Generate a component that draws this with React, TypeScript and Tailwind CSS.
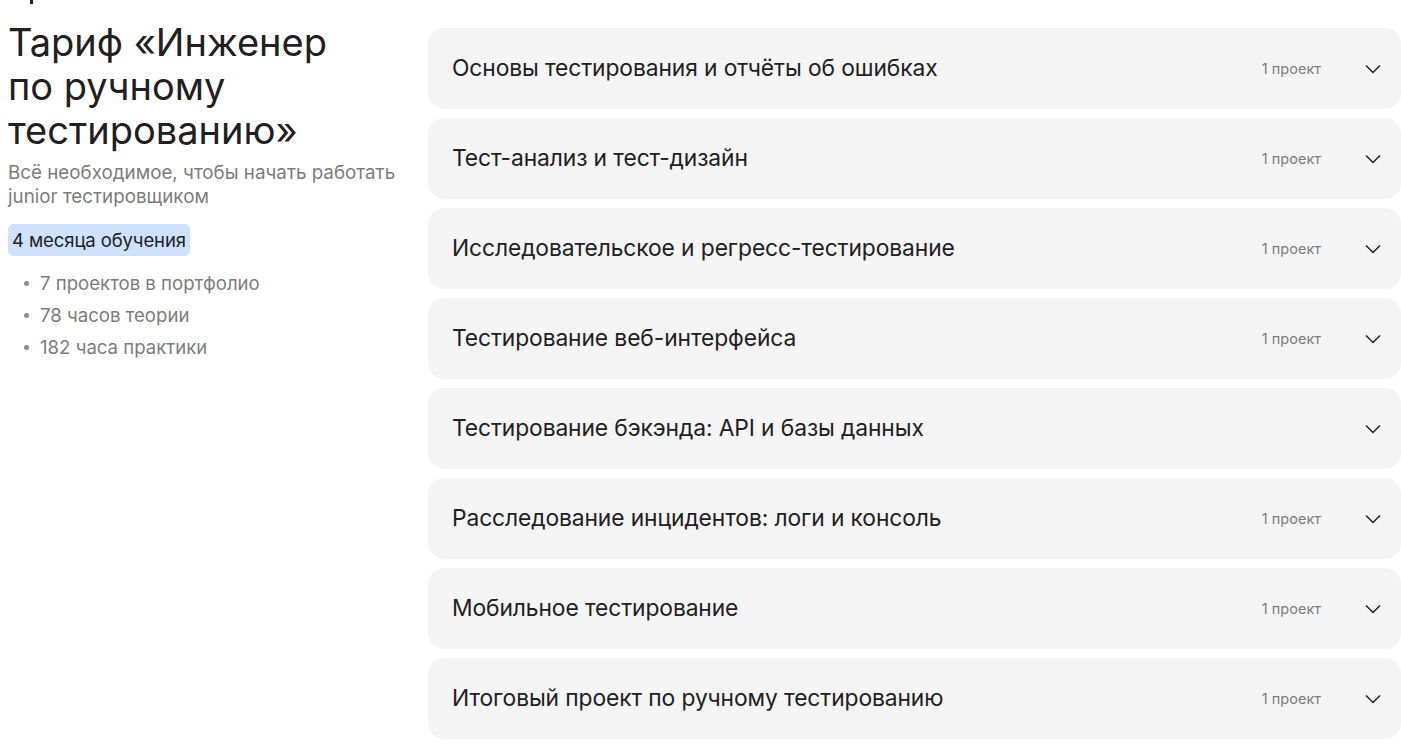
const modules = [
    { title: "Основы тестирования и отчёты об ошибках", projects: "1 проект" },
    { title: "Тест-анализ и тест-дизайн", projects: "1 проект" },
    { title: "Исследовательское и регресс-тестирование", projects: "1 проект" },
    { title: "Тестирование веб-интерфейса", projects: "1 проект" },
    { title: "Тестирование бэкэнда: API и базы данных", projects: "" },
    { title: "Расследование инцидентов: логи и консоль", projects: "1 проект" },
    { title: "Мобильное тестирование", projects: "1 проект" },
    { title: "Итоговый проект по ручному тестированию", projects: "1 проект" },
];

const facts = ["7 проектов в портфолио", "78 часов теории", "182 часа практики"];

const Chevron = () => (
    <svg width="24" height="24" viewBox="0 0 24 24" fill="none" className="text-[#21201f]">
        <path d="M5 8.5l7 7 7-7" stroke="currentColor" strokeWidth="1.5" />
    </svg>
);

const App = () => (
    <div className="min-h-[745px] bg-white text-[#21201f] font-['Inter','Noto_Sans',sans-serif]">
        <div className="ml-[30px] w-[3px] h-[4px] bg-[#21201f]" />
        <div className="flex pl-2 gap-[28px]">
            <aside className="w-[392px] shrink-0">
                <h1 className="mt-[16px] text-[38px] leading-[44px] font-normal">
                    Тариф «Инженер
                    <br />
                    по ручному тестированию»
                </h1>
                <p className="mt-[9px] text-[18.8px] leading-[24px] text-[#7c7c7c]">
                    Всё необходимое, чтобы начать работать junior тестировщиком
                </p>
                <div className="mt-[15px] inline-block rounded-[5px] bg-[#cfe2fc] px-1 text-[18.5px] leading-[32px] tracking-[-0.1px]">
                    4 месяца обучения
                </div>
                <ul className="mt-[11px] pl-[16px] text-[18.6px] leading-[32px] text-[#7c7c7c]">
                    {facts.map((fact) => (
                        <li key={fact} className="flex items-center gap-[11px]">
                            <span className="w-[5px] h-[5px] rounded-full bg-[#8a8a8a]" />
                            {fact}
                        </li>
                    ))}
                </ul>
            </aside>

            <main className="flex-1 pt-[24px] flex flex-col gap-[9px]">
                {modules.map((m) => (
                    <div
                        key={m.title}
                        className="h-[81px] rounded-2xl bg-[#f4f4f4] flex items-center pl-6 pr-4"
                    >
                        <span className="flex-1 text-[22.8px] tracking-[-0.1px]">{m.title}</span>
                        <span className="text-[14.5px] text-[#7c7c7c]">{m.projects}</span>
                        <span className="ml-[40px]">
                            <Chevron />
                        </span>
                    </div>
                ))}
            </main>
        </div>
    </div>
);

export default App;
